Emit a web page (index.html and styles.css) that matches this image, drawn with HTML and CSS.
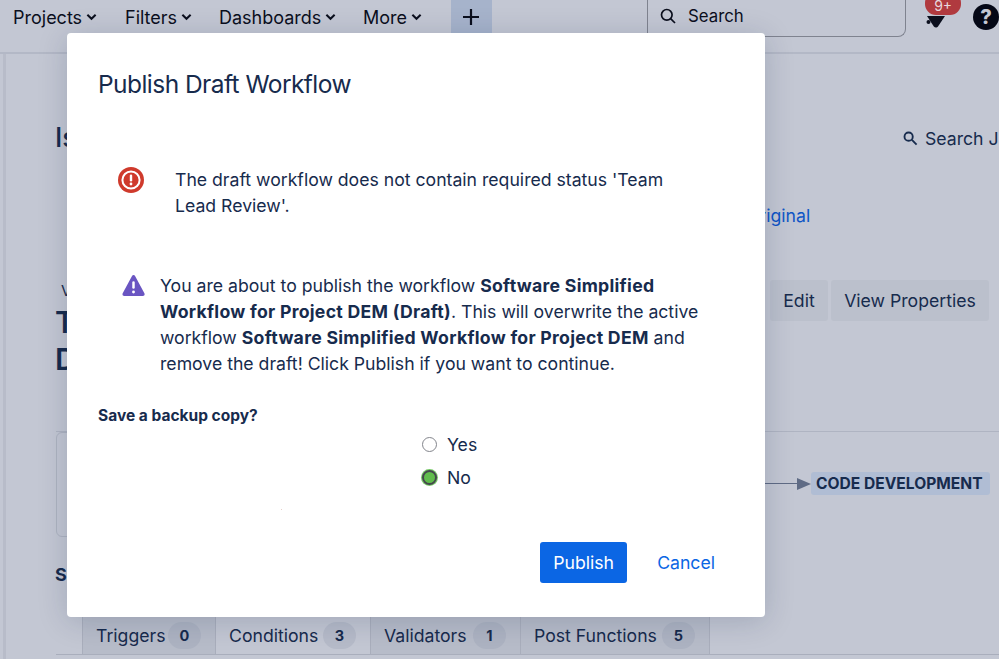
FILE: index.html
```html
<!DOCTYPE html>
<html lang="en">
<head>
<meta charset="utf-8">
<title>Publish Draft Workflow</title>
<link rel="stylesheet" href="styles.css">
</head>
<body>
<div class="page">
  <header class="nav">
    <nav class="menu">
      <a class="menu-item item-projects">Projects <svg class="chev" viewBox="0 0 12 8"><path d="M1.5 1.5 6 6l4.500-4.500"/></svg></a>
      <a class="menu-item item-filters">Filters <svg class="chev" viewBox="0 0 12 8"><path d="M1.5 1.5 6 6l4.500-4.500"/></svg></a>
      <a class="menu-item item-dash">Dashboards <svg class="chev" viewBox="0 0 12 8"><path d="M1.5 1.5 6 6l4.500-4.500"/></svg></a>
      <a class="menu-item item-more">More <svg class="chev" viewBox="0 0 12 8"><path d="M1.5 1.5 6 6l4.500-4.500"/></svg></a>
      <span class="create"><svg class="plus" viewBox="0 0 16 16"><path d="M8 0v16M0 8h16"/></svg></span>
    </nav>
    <div class="search">
      <svg class="search-icon" viewBox="0 0 16 16"><circle cx="6.800" cy="6.800" r="5.300"/><path d="m10.600 10.600 4.400 4.400"/></svg>
      <span>Search</span>
    </div>
    <div class="bell-wrap">
      <svg class="bell" viewBox="0 0 22 20"><path d="M2 8h18l-7 10.500c-.6.8-1.400 1-2 1-.8 0-1.600-.4-2.200-1L2 8Z"/><circle cx="3.500" cy="14" r="2"/></svg>
      <span class="badge">9+</span>
    </div>
    <span class="help">?</span>
  </header>

  <main class="content">
    <div class="row-title">
      <h1 class="page-title">Issues</h1>
      <div class="jira-search">
        <svg class="small-search" viewBox="0 0 16 16"><circle cx="6" cy="6" r="4.400"/><path d="m9.500 9.500 5 5"/></svg>
        <span>Search JIRA</span>
      </div>
    </div>
    <div class="row-link"><a class="original">View Original</a></div>
    <div class="row-workflow">
      <div class="wf-heading">
        <div class="wf-sub">View</div>
        <h2 class="wf-title">Transition<br>Development</h2>
      </div>
      <div class="wf-actions">
        <a class="ghost ghost-edit">Edit</a>
        <a class="ghost ghost-view">View Properties</a>
      </div>
    </div>
    <div class="diagram">
      <div class="diagram-box"></div>
      <div class="diagram-flow">
        <span class="flow-line"></span><span class="flow-head"></span>
        <span class="status">CODE DEVELOPMENT</span>
      </div>
    </div>
    <h3 class="section">Summary</h3>
    <div class="tabs">
      <a class="tab tab-dim tab-triggers">Triggers <b class="count">0</b></a>
      <a class="tab tab-active tab-conditions">Conditions <b class="count">3</b></a>
      <a class="tab tab-dim tab-validators">Validators <b class="count">1</b></a>
      <a class="tab tab-dim tab-post">Post Functions <b class="count">5</b></a>
    </div>
  </main>

  <section class="modal">
    <h2 class="modal-title">Publish Draft Workflow</h2>
    <div class="msg-error">
      <svg class="icon-error" viewBox="0 0 26 26">
        <circle cx="13" cy="13" r="13" fill="#cf3a2c"/>
        <circle cx="13" cy="13" r="8.600" fill="none" stroke="#fff" stroke-width="2"/>
        <rect x="11.800" y="7.600" width="2.400" height="6.800" rx="1.200" fill="#fff"/>
        <circle cx="13" cy="17" r="1.400" fill="#fff"/>
      </svg>
      <p class="msg-text">The draft workflow does not contain required status 'Team Lead Review'.</p>
    </div>
    <div class="msg-warn">
      <svg class="icon-warn" viewBox="0 0 24 22">
        <path d="M10.300 1.200c.8-1.500 2.700-1.500 3.500 0l9.600 18c.7 1.300-.1 2.800-1.600 2.800H2.300C.8 22 0 20.500.7 19.200l9.600-18Z" fill="#6a55c2"/>
        <rect x="10.700" y="6.500" width="2.600" height="8" rx="1.300" fill="#fff"/>
        <circle cx="12" cy="17.800" r="1.500" fill="#fff"/>
      </svg>
      <p class="warn-text">You are about to publish the workflow <strong>Software Simplified Workflow for Project DEM (Draft)</strong>. This will overwrite the active workflow <strong>Software Simplified Workflow for Project DEM</strong> and remove the draft! Click Publish if you want to continue.</p>
    </div>
    <div class="backup-label">Save a backup copy?</div>
    <div class="radio-group">
      <label class="radio-row"><span class="radio"></span>Yes</label>
      <label class="radio-row"><span class="radio radio-on"></span>No</label>
    </div>
    <div class="modal-actions">
      <button class="btn-publish">Publish</button>
      <a class="btn-cancel">Cancel</a>
    </div>
    <span class="speck"></span>
  </section>
</div>
</body>
</html>
```
FILE: styles.css
```css
* { box-sizing: border-box; }
html, body { margin: 0; padding: 0; }
body {
  font-family: Inter, "Liberation Sans", sans-serif;
  color: #172b4d;
  background: #c3c7d3;
}
.page {
  position: relative;
  width: 999px;
  height: 659px;
  overflow: hidden;
  background: #c3c7d3;
}
.page::before {
  content: "";
  position: absolute;
  left: 3px;
  top: 54px;
  bottom: 0;
  width: 3px;
  background: #b8bcc9;
}

/* top bar */
.nav {
  height: 54px;
  display: flex;
  align-items: flex-start;
  border-bottom: 2px solid #b3b8c6;
  color: #0b0f1d;
  font-size: 18px;
}
.menu { display: flex; align-items: flex-start; }
.menu-item {
  display: flex;
  align-items: center;
  gap: 4px;
  height: 34px;
  white-space: nowrap;
}
.item-projects { margin-left: 13px; width: 112px; }
.item-filters { width: 94px; }
.item-dash { width: 144px; }
.item-more { width: 88px; }
.chev { width: 11px; height: 8px; fill: none; stroke: #0b0f1d; stroke-width: 2.200; }
.create {
  width: 41px;
  height: 40px;
  background: #a6b3cb;
  display: flex;
  align-items: flex-start;
  justify-content: center;
  padding: 9px 2px 0 0;
}
.plus { width: 16px; height: 16px; fill: none; stroke: #0b0f1d; stroke-width: 2.200; }
.search {
  width: 260px;
  height: 38px;
  margin-left: 155px;
  margin-top: -1px;
  border: 1px solid #7f838f;
  border-top: 0;
  border-radius: 0 0 8px 0;
  display: flex;
  align-items: center;
  gap: 12px;
  padding: 0 0 3px 12px;
  font-size: 16.800px;
}
.search-icon { width: 16px; height: 16px; fill: none; stroke: #0b0f1d; stroke-width: 1.700; }
.bell-wrap { position: relative; width: 44px; height: 30px; margin-left: 19px; }
.bell { position: absolute; left: 0; top: 8px; width: 22px; height: 20px; fill: #0b0f1d; }
.badge {
  position: absolute;
  left: 0;
  top: -8px;
  width: 36px;
  height: 23px;
  border-radius: 11px;
  background: #b03a3f;
  color: #e8d8de;
  font-size: 14px;
  text-align: center;
  line-height: 27px;
}
.help {
  width: 26px;
  height: 26px;
  margin-left: 4px;
  margin-top: 4px;
  flex: none;
  border-radius: 50%;
  background: #050816;
  color: #c3c7d3;
  font-size: 20px;
  font-weight: 800;
  text-align: center;
  line-height: 26px;
}

/* page behind the dialog */
.content { padding-left: 56px; }
.row-title {
  display: flex;
  justify-content: space-between;
  align-items: center;
  height: 44px;
  margin-top: 62px;
}
.page-title { margin: 0; margin-left: -1px; font-size: 27px; font-weight: 500; line-height: 36px; }
.jira-search {
  display: flex;
  align-items: center;
  gap: 7px;
  width: 96px;
  white-space: nowrap;
  overflow: hidden;
  font-size: 17.650px;
  flex: none;
}
.small-search { width: 15px; height: 15px; flex: none; fill: none; stroke: #172b4d; stroke-width: 2; }
.row-link { height: 37px; margin-top: 45px; padding-left: 644px; }
.original { color: #0f55c6; font-size: 17.650px; white-space: nowrap; }
.row-workflow { display: flex; height: 149px; margin-top: 41px; }
.wf-heading { width: 715px; margin-left: -1px; }
.wf-sub { font-size: 15px; line-height: 20px; margin-top: -2px; padding-left: 6px; }
.wf-title { margin: 3px 0 0; font-size: 30px; font-weight: 600; line-height: 37px; }
.wf-actions { display: flex; gap: 3px; align-items: flex-start; margin-top: -3px; }
.ghost {
  height: 41px;
  background: #bbc0cc;
  border-radius: 3px;
  display: flex;
  align-items: center;
  justify-content: center;
  font-size: 17.650px;
  white-space: nowrap;
}
.ghost-edit { width: 58px; }
.ghost-view { width: 158px; }
.diagram {
  position: relative;
  height: 106px;
  border-top: 1px solid #afb4c2;
  margin-top: -1px;
  display: flex;
  justify-content: flex-end;
  align-items: flex-start;
}
.diagram-box {
  position: absolute;
  left: 0;
  top: 0;
  width: 40px;
  height: 105px;
  border: 1px solid #aeb3c1;
  border-radius: 6px;
}
.diagram-flow { display: flex; align-items: center; margin-top: 40px; margin-right: 9px; }
.flow-line { width: 32px; height: 1px; background: #5f6b85; }
.flow-head {
  width: 0;
  height: 0;
  border-left: 14px solid #5f6b85;
  border-top: 6px solid transparent;
  border-bottom: 6px solid transparent;
}
.status {
  height: 23px;
  width: 179px;
  background: #b0bdd4;
  border-radius: 3px;
  font-size: 15.600px;
  font-weight: 700;
  line-height: 23px;
  padding-left: 5px;
  white-space: nowrap;
}
.section { margin: 27px 0 0 -1px; font-size: 18px; font-weight: 700; line-height: 22px; }
.tabs {
  display: flex;
  height: 39px;
  margin-top: 30px;
  border-bottom: 1px solid #a9aebc;
  padding-left: 26px;
}
.tab {
  display: flex;
  align-items: center;
  justify-content: space-between;
  height: 38px;
  font-size: 17.650px;
  padding: 0 14px 0 13px;
  white-space: nowrap;
  border-right: 1px solid #a9aebc;
}
.tab-dim { background: #b7bcc9; }
.tab-triggers { width: 134px; border-left: 1px solid #a9aebc; }
.tab-conditions { width: 155px; height: 39px; }
.tab-validators { width: 150px; }
.tab-post { width: 189px; }
.count {
  width: 33px;
  height: 27px;
  border-radius: 13.500px;
  background: #adb3c2;
  font-size: 14.500px;
  font-weight: 700;
  text-align: center;
  line-height: 27px;
}
.tab-active .count { background: #b6bbc9; }

/* dialog */
.modal {
  position: absolute;
  left: 67px;
  top: 33px;
  width: 698px;
  height: 584px;
  background: #fff;
  border-radius: 4px;
  box-shadow: 0 4px 30px rgba(9, 30, 66, .18);
  padding: 0 31px;
  font-size: 17.650px;
  line-height: 26px;
}
.modal-title {
  margin: 0;
  padding-top: 33px;
  padding-bottom: 1px;
  font-size: 24.500px;
  font-weight: 400;
  letter-spacing: -.55px;
  line-height: 36px;
}
.msg-error {
  display: flex;
  align-items: flex-start;
  margin-top: 57px;
  padding-left: 20px;
  min-height: 100px;
}
.icon-error { width: 26px; height: 26px; flex: none; margin-top: 7px; }
.msg-text { margin: 7px 0 0 31px; width: 530px; }
.msg-warn { display: flex; align-items: flex-start; padding-left: 24px; }
.icon-warn { width: 23px; height: 21px; flex: none; margin-top: 15px; }
.warn-text { margin: 13px 0 0 15px; width: 560px; }
strong { font-weight: 700; letter-spacing: .28px; }
.backup-label { margin-top: 28px; font-size: 15.500px; font-weight: 700; line-height: 22px; }
.radio-group { display: flex; flex-direction: column; gap: 7px; margin-top: 5px; padding-left: 324px; }
.radio-row { display: flex; align-items: center; gap: 10px; height: 26px; }
.radio {
  width: 15px;
  height: 15px;
  border-radius: 50%;
  border: 1.500px solid #83858c;
  background: #fff;
  margin-top: -2px;
}
.radio-on {
  background: #60bd4c;
  border: 2px solid #44484c;
  box-shadow: 0 0 0 1px #7ac96a;
}
.modal-actions {
  display: flex;
  align-items: center;
  justify-content: flex-end;
  gap: 30px;
  margin-top: 51px;
  padding-right: 19px;
}
.btn-publish {
  width: 87px;
  height: 41px;
  border: 0;
  border-radius: 3px;
  background: #0b66e4;
  color: #fff;
  font: inherit;
  padding: 0;
}
.btn-cancel { color: #0b66e4; }
.speck {
  position: absolute;
  left: 214px;
  top: 476px;
  width: 1px;
  height: 1px;
  background: #e6cfc9;
}
```
